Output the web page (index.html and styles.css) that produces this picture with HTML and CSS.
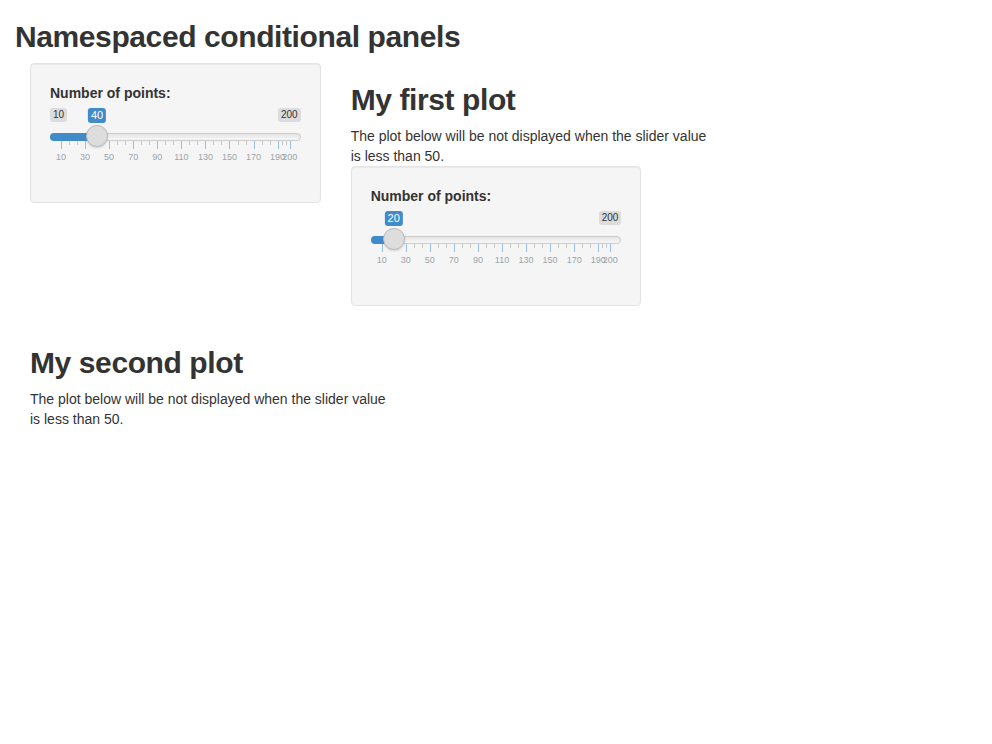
FILE: index.html
```
<!DOCTYPE html>
<html>
<head>
<meta charset="utf-8">
<title>Namespaced conditional panels</title>
<link rel="stylesheet" href="styles.css">
</head>
<body>
<div class="page">
  <h2 class="heading">Namespaced conditional panels</h2>
  <div class="module">
    <div class="layout">
      <div class="sidebar">
        <div class="well">
          <div class="form-group">
            <label class="control-label">Number of points:</label>
            <div class="irs">
              <span class="irs-line"></span>
              <span class="irs-min">10</span>
              <span class="irs-max">200</span>
              <div class="irs-inner">
                <span class="irs-bar" style="width: calc(11px + 15.789%)"></span>
                <div class="irs-grid">
                  <span class="pol" style="left:0%"></span>
                  <span class="pol small" style="left:3.509%"></span><span class="pol small" style="left:7.018%"></span><span class="pol" style="left:10.526%"></span>
                  <span class="pol small" style="left:14.035%"></span><span class="pol small" style="left:17.544%"></span><span class="pol" style="left:21.053%"></span>
                  <span class="pol small" style="left:24.561%"></span><span class="pol small" style="left:28.070%"></span><span class="pol" style="left:31.579%"></span>
                  <span class="pol small" style="left:35.088%"></span><span class="pol small" style="left:38.596%"></span><span class="pol" style="left:42.105%"></span>
                  <span class="pol small" style="left:45.614%"></span><span class="pol small" style="left:49.123%"></span><span class="pol" style="left:52.632%"></span>
                  <span class="pol small" style="left:56.140%"></span><span class="pol small" style="left:59.649%"></span><span class="pol" style="left:63.158%"></span>
                  <span class="pol small" style="left:66.667%"></span><span class="pol small" style="left:70.175%"></span><span class="pol" style="left:73.684%"></span>
                  <span class="pol small" style="left:77.193%"></span><span class="pol small" style="left:80.702%"></span><span class="pol" style="left:84.211%"></span>
                  <span class="pol small" style="left:87.719%"></span><span class="pol small" style="left:91.228%"></span><span class="pol" style="left:94.737%"></span>
                  <span class="pol small" style="left:96.491%"></span><span class="pol small" style="left:98.246%"></span><span class="pol" style="left:100%"></span>
                  <span class="gtext" style="left:0%">10</span>
                  <span class="gtext" style="left:10.526%">30</span>
                  <span class="gtext" style="left:21.053%">50</span>
                  <span class="gtext" style="left:31.579%">70</span>
                  <span class="gtext" style="left:42.105%">90</span>
                  <span class="gtext" style="left:52.632%">110</span>
                  <span class="gtext" style="left:63.158%">130</span>
                  <span class="gtext" style="left:73.684%">150</span>
                  <span class="gtext" style="left:84.211%">170</span>
                  <span class="gtext" style="left:94.737%">190</span>
                  <span class="gtext" style="left:100%">200</span>
                </div>
                <span class="irs-single" style="left:15.789%">40</span>
                <span class="irs-handle" style="left:15.789%"></span>
              </div>
            </div>
          </div>
        </div>
      </div>
      <div class="main">
        <h2 class="heading">My first plot</h2>
        <div class="note">The plot below will be not displayed when the slider value is less than 50.</div>
        <div class="well">
          <div class="form-group">
            <label class="control-label">Number of points:</label>
            <div class="irs">
              <span class="irs-line"></span>
              <span class="irs-max">200</span>
              <div class="irs-inner">
                <span class="irs-bar" style="width: calc(11px + 5.263%)"></span>
                <div class="irs-grid">
                  <span class="pol" style="left:0%"></span>
                  <span class="pol small" style="left:3.509%"></span><span class="pol small" style="left:7.018%"></span><span class="pol" style="left:10.526%"></span>
                  <span class="pol small" style="left:14.035%"></span><span class="pol small" style="left:17.544%"></span><span class="pol" style="left:21.053%"></span>
                  <span class="pol small" style="left:24.561%"></span><span class="pol small" style="left:28.070%"></span><span class="pol" style="left:31.579%"></span>
                  <span class="pol small" style="left:35.088%"></span><span class="pol small" style="left:38.596%"></span><span class="pol" style="left:42.105%"></span>
                  <span class="pol small" style="left:45.614%"></span><span class="pol small" style="left:49.123%"></span><span class="pol" style="left:52.632%"></span>
                  <span class="pol small" style="left:56.140%"></span><span class="pol small" style="left:59.649%"></span><span class="pol" style="left:63.158%"></span>
                  <span class="pol small" style="left:66.667%"></span><span class="pol small" style="left:70.175%"></span><span class="pol" style="left:73.684%"></span>
                  <span class="pol small" style="left:77.193%"></span><span class="pol small" style="left:80.702%"></span><span class="pol" style="left:84.211%"></span>
                  <span class="pol small" style="left:87.719%"></span><span class="pol small" style="left:91.228%"></span><span class="pol" style="left:94.737%"></span>
                  <span class="pol small" style="left:96.491%"></span><span class="pol small" style="left:98.246%"></span><span class="pol" style="left:100%"></span>
                  <span class="gtext" style="left:0%">10</span>
                  <span class="gtext" style="left:10.526%">30</span>
                  <span class="gtext" style="left:21.053%">50</span>
                  <span class="gtext" style="left:31.579%">70</span>
                  <span class="gtext" style="left:42.105%">90</span>
                  <span class="gtext" style="left:52.632%">110</span>
                  <span class="gtext" style="left:63.158%">130</span>
                  <span class="gtext" style="left:73.684%">150</span>
                  <span class="gtext" style="left:84.211%">170</span>
                  <span class="gtext" style="left:94.737%">190</span>
                  <span class="gtext" style="left:100%">200</span>
                </div>
                <span class="irs-single" style="left:5.263%">20</span>
                <span class="irs-handle" style="left:5.263%"></span>
              </div>
            </div>
          </div>
        </div>
      </div>
    </div>
    <h2 class="heading">My second plot</h2>
    <div class="note">The plot below will be not displayed when the slider value is less than 50.</div>
  </div>
</div>
</body>
</html>
```
FILE: styles.css
```
* {
  box-sizing: border-box;
}

html, body {
  margin: 0;
  padding: 0;
  background: #fff;
}

body {
  font-family: "Liberation Sans", Arial, Helvetica, sans-serif;
  font-size: 14px;
  line-height: 20px;
  color: #333;
}

.page {
  padding: 0 15px;
}

.heading {
  font-size: 30px;
  font-weight: bold;
  line-height: 33px;
  letter-spacing: -0.4px;
  margin: 20px 0 10px;
  color: #333;
}

.module {
  padding: 0 15px;
}

.layout {
  display: grid;
  grid-template-columns: 290.67px 1fr;
  column-gap: 30px;
  align-items: start;
}

.main {
  min-width: 0;
}

.note {
  width: 368px;
}

.main .well {
  width: 290.67px;
}

.well {
  min-height: 20px;
  padding: 19px;
  margin-bottom: 20px;
  background: #f5f5f5;
  border: 1px solid #e3e3e3;
  border-radius: 4px;
  box-shadow: inset 0 1px 1px rgba(0, 0, 0, 0.05);
}

.form-group {
  margin-bottom: 15px;
}

.control-label {
  display: block;
  font-weight: bold;
  margin-bottom: 5px;
}

.irs {
  position: relative;
  height: 60px;
}

.irs-line {
  position: absolute;
  left: 0;
  right: 0;
  top: 25px;
  height: 8px;
  border: 1px solid #ccc;
  border-radius: 16px;
  background: linear-gradient(to bottom, #ddd -50%, #fff 150%);
}

.irs-min,
.irs-max {
  position: absolute;
  top: 0;
  font-size: 10px;
  line-height: 12px;
  padding: 1px 3px;
  color: #333;
  background: rgba(0, 0, 0, 0.1);
  border-radius: 3px;
}

.irs-min {
  left: 0;
}

.irs-max {
  right: 0;
}

.irs-inner {
  position: absolute;
  left: 11px;
  right: 11px;
  top: 0;
  bottom: 0;
}

.irs-bar {
  position: absolute;
  left: -11px;
  top: 25px;
  height: 8px;
  background: #428bca;
  border-radius: 16px 0 0 16px;
}

.irs-single {
  position: absolute;
  top: 0;
  transform: translateX(-50%);
  font-size: 11px;
  line-height: 13px;
  padding: 1px 3px;
  color: #fff;
  background: #428bca;
  border-radius: 3px;
  white-space: nowrap;
}

.irs-handle {
  position: absolute;
  top: 17px;
  width: 22px;
  height: 22px;
  margin-left: -11px;
  background: #ddd;
  border: 1px solid #bbb;
  border-radius: 50%;
  box-shadow: 0 1px 2px rgba(0, 0, 0, 0.15);
}

.irs-grid {
  position: absolute;
  left: 0;
  right: 0;
  top: 33px;
  height: 27px;
}

.pol {
  position: absolute;
  top: 0;
  width: 1px;
  height: 8px;
  background: #428bca;
  opacity: 0.5;
}

.pol.small {
  height: 4px;
  background: #999;
}

.gtext {
  position: absolute;
  bottom: 5px;
  transform: translateX(-50%);
  font-size: 9px;
  line-height: 11px;
  color: #99a4ac;
  white-space: nowrap;
}
```
